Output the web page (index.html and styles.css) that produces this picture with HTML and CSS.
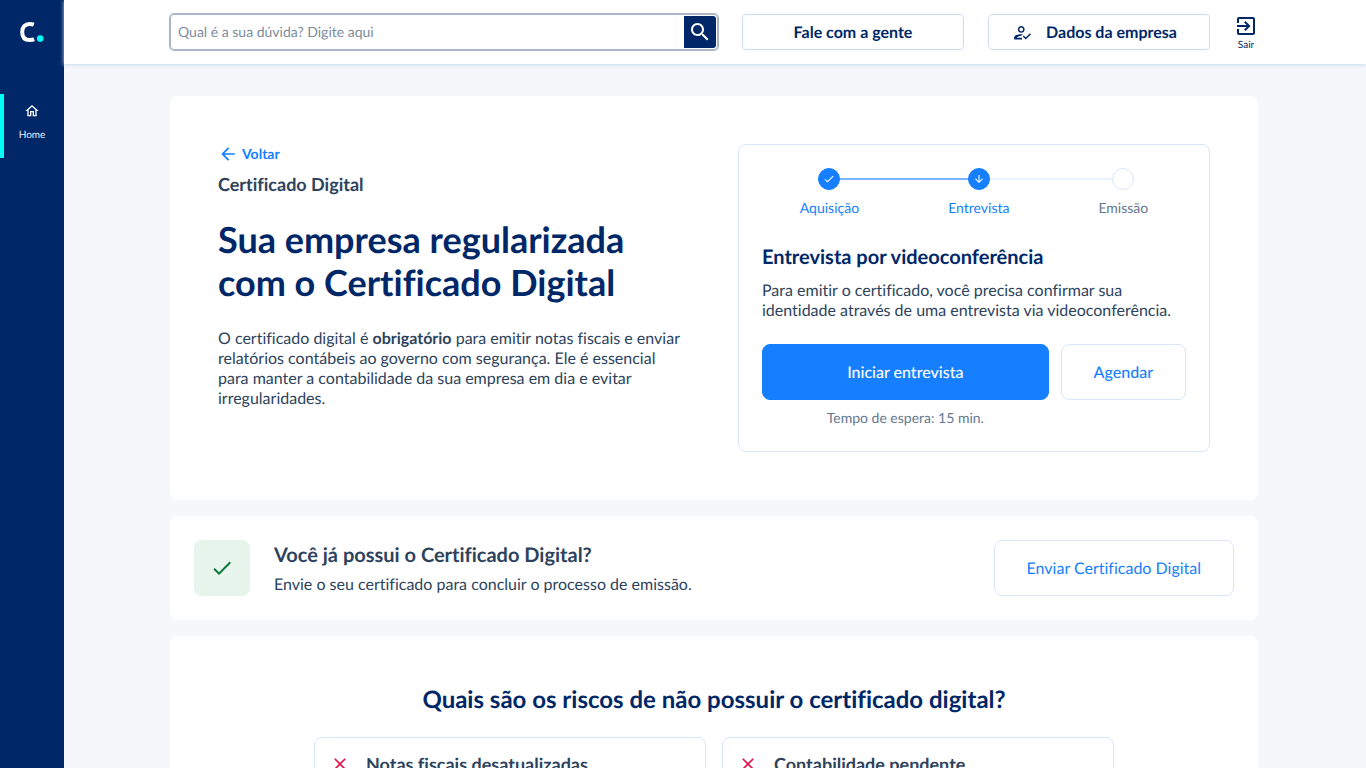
FILE: index.html
```html
<!DOCTYPE html>
<html lang="pt-BR">
<head>
  <meta charset="UTF-8">
  <meta name="viewport" content="width=device-width, initial-scale=1.0">
  <title>Certificado Digital</title>
  <link rel="stylesheet" href="styles.css">
</head>
<body>
  <div class="app">
    <nav class="sidebar">
      <a class="logo" href="#" aria-label="Início">
        <svg width="24" height="20" viewBox="0 0 24 20" fill="none">
          <path d="M13.800 2.700C12.500 2.200 11 2 9.600 2C5 2 2.200 5 2.200 10C2.200 15 4.800 18 9.600 18C11.200 18 12.800 17.900 14.200 17.400" stroke="#fff" stroke-width="4"/>
          <circle cx="20.200" cy="16.600" r="3.300" fill="#00fff5"/>
        </svg>
      </a>
      <a class="nav-item active" href="#">
        <svg width="16" height="16" viewBox="0 0 24 24" fill="#fff">
          <path d="M12 3L2 12h3v8h6v-6h2v6h6v-8h3L12 3zm5 15h-2v-6H9v6H7v-7.810l5-4.500 5 4.500V18z"/>
        </svg>
        <span>Home</span>
      </a>
    </nav>

    <div class="page">
      <header class="topbar">
        <div class="container topbar-row">
          <form class="search">
            <input type="text" placeholder="Qual é a sua dúvida? Digite aqui" aria-label="Qual é a sua dúvida?">
            <button type="button" aria-label="Buscar">
              <svg width="24" height="24" viewBox="0 0 24 24" fill="#fff">
                <path d="M15.500 14h-.79l-.28-.27C15.410 12.590 16 11.110 16 9.500 16 5.910 13.090 3 9.500 3S3 5.910 3 9.500 5.910 16 9.500 16c1.610 0 3.090-.59 4.230-1.570l.27.28v.79l5 4.990L20.490 19l-4.990-5zm-6 0C7.010 14 5 11.990 5 9.500S7.010 5 9.500 5 14 7.010 14 9.500 11.990 14 9.500 14z"/>
              </svg>
            </button>
          </form>
          <button class="top-btn">Fale com a gente</button>
          <button class="top-btn company">
            <svg width="18" height="18" viewBox="0 0 24 24" fill="#002767">
              <path d="M11 13c2.480 0 4.500-2.020 4.500-4.500S13.480 4 11 4 6.500 6.020 6.500 8.500 8.520 13 11 13zm0-7c1.380 0 2.500 1.120 2.500 2.500S12.380 11 11 11 8.500 9.880 8.500 8.500 9.620 6 11 6zM5 19.500c.6-1 3-2.200 6-2.500l2-2c-.7-.1-1.400-.1-2-.1-3.300 0-9.500 1.300-9.500 4.600v2.500H12v-2.500zM17 22l-4-4 1.400-1.400 2.600 2.600 5.600-5.700L24 14.900z"/>
            </svg>
            <span>Dados da empresa</span>
          </button>
          <a class="logout" href="#">
            <svg width="24" height="24" viewBox="0 0 24 24" fill="#002767">
              <path d="M10.090 15.590L11.500 17l5-5-5-5-1.410 1.410L12.670 11H3v2h9.670l-2.580 2.590zM19 3H5c-1.110 0-2 .9-2 2v4h2V5h14v14H5v-4H3v4c0 1.100.89 2 2 2h14c1.100 0 2-.9 2-2V5c0-1.100-.9-2-2-2z"/>
            </svg>
            <span>Sair</span>
          </a>
        </div>
      </header>

      <main class="content">
        <div class="container stack">
          <section class="card hero">
            <div class="hero-text">
              <a class="back" href="#">
                <svg width="20" height="20" viewBox="0 0 24 24" fill="#157fff">
                  <path d="M20 11H7.830l5.590-5.590L12 4l-8 8 8 8 1.410-1.410L7.830 13H20v-2z"/>
                </svg>
                Voltar
              </a>
              <p class="crumb">Certificado Digital</p>
              <h1>Sua empresa regularizada com o Certificado Digital</h1>
              <p class="lead">O certificado digital é <strong>obrigatório</strong> para emitir notas fiscais e enviar relatórios contábeis ao governo com segurança. Ele é essencial para manter a contabilidade da sua empresa em dia e evitar irregularidades.</p>
            </div>

            <div class="interview">
              <ol class="steps">
                <li class="step done">
                  <span class="dot">
                    <svg width="12" height="12" viewBox="0 0 24 24" fill="#fff"><path d="M9 16.170L4.830 12l-1.420 1.410L9 19 21 7l-1.410-1.410z"/></svg>
                  </span>
                  Aquisição
                </li>
                <li class="step current">
                  <span class="dot">
                    <svg width="12" height="12" viewBox="0 0 24 24" fill="#fff"><path d="M20 12l-1.410-1.410L13 16.170V4h-2v12.170l-5.580-5.590L4 12l8 8 8-8z"/></svg>
                  </span>
                  Entrevista
                </li>
                <li class="step">
                  <span class="dot"></span>
                  Emissão
                </li>
              </ol>
              <h2>Entrevista por videoconferência</h2>
              <p>Para emitir o certificado, você precisa confirmar sua identidade através de uma entrevista via videoconferência.</p>
              <div class="actions">
                <div class="start">
                  <button class="btn btn-primary">Iniciar entrevista</button>
                  <small>Tempo de espera: 15 min.</small>
                </div>
                <button class="btn btn-outline">Agendar</button>
              </div>
            </div>
          </section>

          <section class="card upload">
            <div class="check">
              <svg width="24" height="24" viewBox="0 0 24 24" fill="#0b7a3b"><path d="M9 16.170L4.830 12l-1.420 1.410L9 19 21 7l-1.410-1.410z"/></svg>
            </div>
            <div class="upload-text">
              <h2>Você já possui o Certificado Digital?</h2>
              <p>Envie o seu certificado para concluir o processo de emissão.</p>
            </div>
            <button class="btn btn-outline btn-light">Enviar Certificado Digital</button>
          </section>

          <section class="card risks">
            <h2>Quais são os riscos de não possuir o certificado digital?</h2>
            <div class="risk-grid">
              <article class="risk">
                <svg width="20" height="20" viewBox="0 0 24 24" fill="#e0144c"><path d="M19 6.410L17.590 5 12 10.590 6.410 5 5 6.410 10.590 12 5 17.590 6.410 19 12 13.410 17.590 19 19 17.590 13.410 12z"/></svg>
                <h3>Notas fiscais desatualizadas</h3>
              </article>
              <article class="risk">
                <svg width="20" height="20" viewBox="0 0 24 24" fill="#e0144c"><path d="M19 6.410L17.590 5 12 10.590 6.410 5 5 6.410 10.590 12 5 17.590 6.410 19 12 13.410 17.590 19 19 17.590 13.410 12z"/></svg>
                <h3>Contabilidade pendente</h3>
              </article>
            </div>
          </section>
        </div>
      </main>
    </div>
  </div>
</body>
</html>
```
FILE: styles.css
```css
* {
  box-sizing: border-box;
}

body, h1, h2, h3, p, ol {
  margin: 0;
  padding: 0;
}

body {
  font-family: Lato, sans-serif;
  font-size: 16px;
  line-height: 20px;
  font-variant-ligatures: none;
  text-rendering: geometricPrecision;
  color: #2d435d;
  background: #f5f7fb;
}

a {
  text-decoration: none;
}

button, input {
  font-family: inherit;
  font-variant-ligatures: none;
  text-rendering: inherit;
}

button {
  cursor: pointer;
}

.app {
  display: flex;
  height: 100vh;
}

/* sidebar */
.sidebar {
  flex: 0 0 64px;
  background: #002767;
}

.logo {
  display: flex;
  align-items: center;
  justify-content: center;
  height: 64px;
}

.nav-item {
  display: flex;
  flex-direction: column;
  align-items: center;
  gap: 9px;
  height: 64px;
  margin-top: 30px;
  padding: 9px 4px 0 0;
  border-left: 4px solid transparent;
  color: #e6ecf5;
  font-size: 10px;
  line-height: 14px;
}

.nav-item.active {
  border-color: #00fff5;
}

/* header */
.page {
  flex: 1;
  min-width: 0;
  display: flex;
  flex-direction: column;
}

.container {
  max-width: 1088px;
  margin: 0 auto;
}

.topbar {
  position: relative;
  z-index: 1;
  flex: 0 0 64px;
  padding: 0 26px 0 24px;
  background: #fff;
  box-shadow: 0 1px 4px #c8dcee;
}

.topbar-row {
  display: flex;
  align-items: center;
  gap: 24px;
  height: 64px;
}

.search {
  flex: 1;
  display: flex;
  height: 36px;
  padding: 1px;
  border: 1px solid #a7b5c6;
  border-radius: 4px;
  box-shadow: 0 0 0 1px #a7b5c6;
}

.search input {
  flex: 1;
  min-width: 0;
  padding: 0 6px 2px;
  border: none;
  outline: none;
  background: transparent;
  font-size: 14px;
  color: #2d435d;
}

.search input::placeholder {
  color: #7c8b9d;
}

.search button {
  display: flex;
  align-items: center;
  justify-content: center;
  width: 32px;
  padding: 0;
  border: none;
  border-radius: 0 3px 3px 0;
  background: #002767;
}

.top-btn {
  display: flex;
  align-items: center;
  justify-content: center;
  gap: 15px;
  width: 222px;
  height: 36px;
  padding: 0 6px;
  border: 1px solid #cfdeee;
  border-radius: 4px;
  background: #fff;
  color: #002767;
  font-size: 16px;
  font-weight: 700;
}

.top-btn.company {
  padding-right: 14px;
}

.logout {
  display: flex;
  flex-direction: column;
  align-items: center;
  width: 24px;
  padding-top: 2px;
  color: #002767;
  font-size: 10px;
  line-height: 14px;
}

/* content */
.content {
  flex: 1;
  min-height: 0;
  overflow-y: auto;
  scrollbar-width: none;
  padding: 32px 26px 32px 24px;
}

.stack {
  display: flex;
  flex-direction: column;
  gap: 16px;
}

.card {
  border-radius: 8px;
  background: #fff;
}

.hero {
  display: flex;
  justify-content: space-between;
  gap: 48px;
  padding: 48px;
}

.hero-text {
  flex: 0 1 472px;
}

.back {
  display: flex;
  align-items: center;
  gap: 4px;
  width: fit-content;
  color: #157fff;
  font-size: 14px;
  font-weight: 700;
}

.crumb {
  margin-top: 8px;
  font-size: 18px;
  line-height: 24px;
  font-weight: 700;
}

h1 {
  margin-top: 22px;
  color: #002767;
  font-size: 36px;
  line-height: 43px;
  font-weight: 700;
}

.lead {
  margin-top: 25px;
}

.interview {
  flex: 0 1 472px;
  padding: 23px;
  border: 1px solid #d9e8f8;
  border-radius: 8px;
}

.steps {
  display: flex;
  justify-content: center;
  gap: 89px;
  list-style: none;
}

.step {
  position: relative;
  display: flex;
  flex-direction: column;
  align-items: center;
  gap: 8px;
  color: #64788f;
  font-size: 14px;
}

/* line towards the next step, drawn under the dots */
.step:not(:last-child)::after {
  content: "";
  position: absolute;
  top: 10px;
  left: 50%;
  width: calc(100% + 89px);
  height: 2px;
  background: #ebf3ff;
}

.step.done::after {
  background: #7ab6ff !important;
}

.dot {
  position: relative;
  z-index: 1;
  display: flex;
  align-items: center;
  justify-content: center;
  width: 22px;
  height: 22px;
  border: 1px solid #d9e8f8;
  border-radius: 50%;
  background: #fff;
}

.done, .current {
  color: #157fff;
}

.done .dot, .current .dot {
  border-color: #157fff;
  background: #157fff;
}

.interview h2, .upload h2 {
  font-size: 20px;
  line-height: 24px;
  font-weight: 700;
}

.interview h2 {
  margin: 27px 0 12px;
  color: #002767;
}

.actions {
  display: flex;
  align-items: flex-start;
  gap: 12px;
  margin-top: 23px;
}

.start {
  flex: 1;
  display: flex;
  flex-direction: column;
  gap: 8px;
  text-align: center;
}

.start small {
  color: #64788f;
  font-size: 14px;
}

.btn {
  height: 56px;
  padding: 0 32px;
  border: 1px solid #157fff;
  border-radius: 8px;
  font-size: 16px;
  font-weight: 500;
}

.btn-primary {
  background: #157fff;
  color: #fff;
}

.btn-outline {
  border-color: #d9e8f8;
  background: #fff;
  color: #157fff;
}

.btn-light {
  font-weight: 400;
}

.upload {
  display: flex;
  align-items: center;
  gap: 24px;
  padding: 24px;
}

.check {
  display: flex;
  align-items: center;
  justify-content: center;
  width: 56px;
  height: 56px;
  border-radius: 8px;
  background: #e8f5ed;
}

.upload-text {
  flex: 1;
  padding-top: 2px;
}

.upload-text p {
  margin-top: 8px;
}

.risks {
  padding: 48px 144px;
}

.risks h2 {
  color: #002767;
  font-size: 24px;
  line-height: 32px;
  font-weight: 700;
  text-align: center;
}

.risk-grid {
  display: grid;
  grid-template-columns: 1fr 1fr;
  gap: 16px;
  margin-top: 21px;
}

.risk {
  display: flex;
  align-items: center;
  gap: 16px;
  padding: 14px 15px;
  border: 1px solid #d9e8f8;
  border-radius: 8px;
}

.risk h3 {
  font-size: 18px;
  line-height: 24px;
  font-weight: 700;
}
```
